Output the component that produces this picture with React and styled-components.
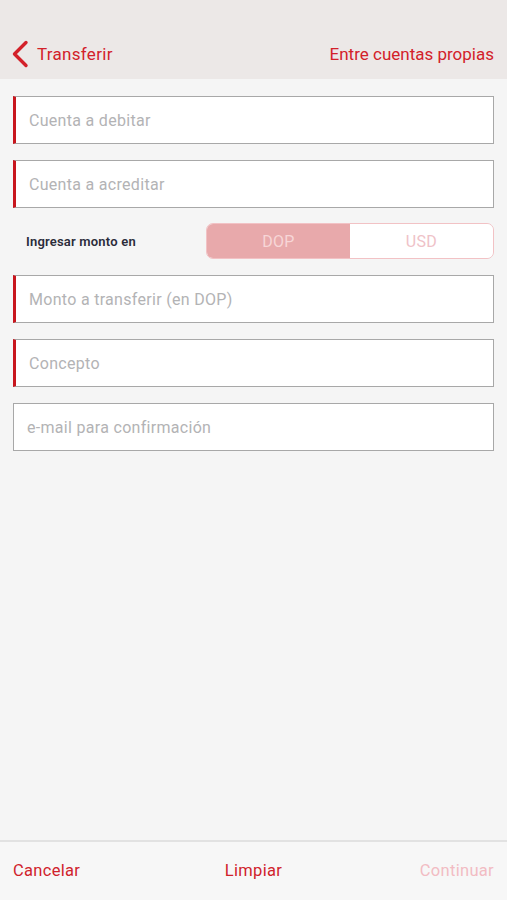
import React from 'react';
import styled, { createGlobalStyle } from "styled-components";

const GlobalStyle = createGlobalStyle`
    html, body {
        margin: 0;
        padding: 0;
        background: #f5f5f5;
        font-family: Roboto, "Liberation Sans", sans-serif;
    }
`;

function App() {
    return (
        <Page>
            <GlobalStyle/>
            <Header>
                <BackLink>
                    <svg width="20" height="28" viewBox="0 0 20 28">
                        <path d="M16 2.5 L4.5 14 L16 25.5" fill="none" stroke="#d3212a" strokeWidth="3.4" strokeLinecap="round" strokeLinejoin="round"/>
                    </svg>
                    <span>Transferir</span>
                </BackLink>
                <HeaderTitle>Entre cuentas propias</HeaderTitle>
            </Header>

            <Form>
                <Field required>Cuenta a debitar</Field>
                <Field required>Cuenta a acreditar</Field>
                <ToggleRow>
                    <ToggleLabel>Ingresar monto en</ToggleLabel>
                    <Toggle>
                        <ToggleOption active>DOP</ToggleOption>
                        <ToggleOption>USD</ToggleOption>
                    </Toggle>
                </ToggleRow>
                <Field required>Monto a transferir (en DOP)</Field>
                <Field required>Concepto</Field>
                <Field>e-mail para confirmación</Field>
            </Form>

            <Footer>
                <FooterButton align="left">Cancelar</FooterButton>
                <FooterButton align="center">Limpiar</FooterButton>
                <FooterButton align="right" disabled>Continuar</FooterButton>
            </Footer>
        </Page>
    )
}

const Page = styled.div`
    width: 507px;
    height: 900px;
    display: flex;
    flex-direction: column;
    background: #f5f5f5;
`;

const Header = styled.header`
    height: 79px;
    background: #ece8e7;
    display: flex;
    align-items: flex-end;
    justify-content: space-between;
    padding: 0 13px 11px 10px;
    box-sizing: border-box;
    color: #d3212a;
    font-size: 17px;
`;

const BackLink = styled.div`
    display: flex;
    align-items: center;
    gap: 7px;
    letter-spacing: 0.3px;
`;

const HeaderTitle = styled.div`
    padding-bottom: 4px;
`;

const Form = styled.main`
    flex: 1;
    display: flex;
    flex-direction: column;
    gap: 16px;
    padding: 17px 13px 0;
`;

const Field = styled.div`
    height: 48px;
    box-sizing: border-box;
    background: #fff;
    border: 1px solid #a8a8a8;
    border-left: ${p => p.required ? "3px solid #c8161e" : "1px solid #a8a8a8"};
    display: flex;
    align-items: center;
    padding-left: 13px;
    color: #b3b3b5;
    font-size: 16px;
    letter-spacing: 0.3px;
`;

const ToggleRow = styled.div`
    display: flex;
    align-items: center;
    justify-content: space-between;
    margin-top: -1px;
`;

const ToggleLabel = styled.div`
    padding-left: 13px;
    font-size: 13px;
    font-weight: 600;
    color: #2b2c3a;
    letter-spacing: 0.2px;
`;

const Toggle = styled.div`
    width: 288px;
    height: 36px;
    box-sizing: border-box;
    border: 1px solid #f2c2c5;
    border-radius: 7px;
    overflow: hidden;
    display: flex;
`;

const ToggleOption = styled.div`
    flex: 1;
    display: flex;
    align-items: center;
    justify-content: center;
    font-size: 16px;
    letter-spacing: 0.3px;
    background: ${p => p.active ? "#e8a9ab" : "#fff"};
    color: ${p => p.active ? "#f7d6d7" : "#efc2c8"};
`;

const Footer = styled.footer`
    height: 60px;
    border-top: 2px solid #e2e2e2;
    background: #f7f7f7;
    display: grid;
    grid-template-columns: 1fr 1fr 1fr;
    align-items: center;
    padding: 0 13px 2px;
    box-sizing: border-box;
`;

const FooterButton = styled.div`
    font-size: 16.5px;
    letter-spacing: 0.3px;
    text-align: ${p => p.align};
    color: ${p => p.disabled ? "#f2bcc3" : "#d0232c"};
    cursor: pointer;
`;

export default App;
